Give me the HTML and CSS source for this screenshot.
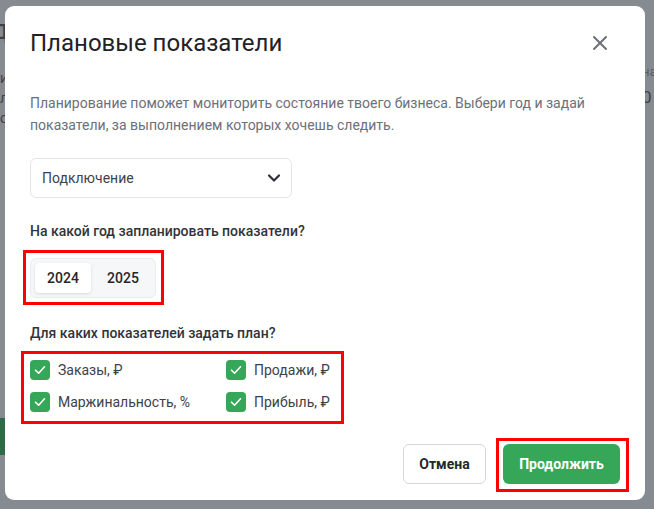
FILE: index.html
```html
<!DOCTYPE html>
<html lang="ru">
<head>
    <meta charset="UTF-8">
    <meta name="viewport" content="width=device-width, initial-scale=1.0">
    <title>Плановые показатели</title>
    <link rel="stylesheet" href="styles.css">
</head>
<body>
    <!-- page under the overlay -->
    <div class="page">
        <div class="page-left">
            <p class="page-title">Д</p>
            <p>Ми</p>
            <p>Пл</p>
            <p>Ро</p>
            <div class="page-btn"></div>
        </div>
        <div class="page-right">
            <p class="small">на</p>
            <p class="big">0</p>
        </div>
    </div>

    <div class="backdrop">
        <div class="modal">
            <div class="modal-header">
                <h1>Плановые показатели</h1>
                <button class="close-btn" aria-label="Закрыть">
                    <svg width="16" height="16" viewBox="0 0 16 16">
                        <path d="M2 2L14 14M14 2L2 14" stroke="#6b7078" stroke-width="2" stroke-linecap="round"/>
                    </svg>
                </button>
            </div>

            <p class="description">Планирование поможет мониторить состояние твоего бизнеса. Выбери год и задай показатели, за выполнением которых хочешь следить.</p>

            <div class="select">
                <span>Подключение</span>
                <svg width="14" height="14" viewBox="0 0 14 14">
                    <path d="M2 4.5L7 9.5L12 4.5" fill="none" stroke="#2b2f36" stroke-width="2.2" stroke-linecap="round" stroke-linejoin="round"/>
                </svg>
            </div>

            <p class="field-label year-label">На какой год запланировать показатели?</p>

            <div class="year-toggle">
                <button class="year-btn active">2024</button>
                <button class="year-btn">2025</button>
            </div>

            <p class="field-label metrics-label">Для каких показателей задать план?</p>

            <div class="metrics">
                <label class="check"><span class="box"><svg width="14" height="14" viewBox="0 0 14 14"><path d="M2.5 7.2L5.6 10.2L11.5 3.8" fill="none" stroke="#fff" stroke-width="1.6" stroke-linecap="round" stroke-linejoin="round"/></svg></span>Заказы, ₽</label>
                <label class="check"><span class="box"><svg width="14" height="14" viewBox="0 0 14 14"><path d="M2.5 7.2L5.6 10.2L11.5 3.8" fill="none" stroke="#fff" stroke-width="1.6" stroke-linecap="round" stroke-linejoin="round"/></svg></span>Продажи, ₽</label>
                <label class="check"><span class="box"><svg width="14" height="14" viewBox="0 0 14 14"><path d="M2.5 7.2L5.6 10.2L11.5 3.8" fill="none" stroke="#fff" stroke-width="1.6" stroke-linecap="round" stroke-linejoin="round"/></svg></span>Маржинальность, %</label>
                <label class="check"><span class="box"><svg width="14" height="14" viewBox="0 0 14 14"><path d="M2.5 7.2L5.6 10.2L11.5 3.8" fill="none" stroke="#fff" stroke-width="1.6" stroke-linecap="round" stroke-linejoin="round"/></svg></span>Прибыль, ₽</label>
            </div>

            <div class="modal-footer">
                <button class="btn btn-cancel">Отмена</button>
                <button class="btn btn-primary">Продолжить</button>
            </div>
        </div>
    </div>
</body>
</html>
```

FILE: styles.css
```css
* {
    margin: 0;
    padding: 0;
    box-sizing: border-box;
}

body {
    font-family: Roboto, "Noto Sans", Arial, sans-serif;
    background-color: #868a91;
    height: 509px;
    overflow: hidden;
}

/* background page, already dimmed */
.page {
    display: flex;
    justify-content: space-between;
    height: 509px;
    color: #3e4147;
    font-size: 14px;
}

.page-left {
    width: 40px;
    margin-left: -32px;
    padding-top: 22px;
}

.page-left p {
    line-height: 20px;
    text-align: right;
}

.page-left .page-title {
    font-size: 20px;
    font-weight: 700;
    margin-bottom: 26px;
}

.page-btn {
    margin-top: 290px;
    height: 37px;
    background-color: #2d6a45;
    border-radius: 4px;
}

.page-right {
    width: 30px;
    margin-right: -18px;
    padding-top: 64px;
}

.page-right .small {
    color: #5a5e65;
    font-size: 13px;
}

.page-right .big {
    font-size: 17px;
    margin-top: 8px;
}

/* modal */
.backdrop {
    position: fixed;
    inset: 0;
    padding: 6px 9px 9px 5px;
}

.modal {
    height: 100%;
    background-color: #fff;
    border-radius: 9px;
    padding: 24px 25px 16px 25px;
    display: flex;
    flex-direction: column;
}

.modal-header {
    display: flex;
    justify-content: space-between;
    align-items: center;
    padding-right: 12px;
}

.modal-header h1 {
    font-size: 24px;
    font-weight: 400;
    line-height: 26px;
    color: #1f2226;
}

.close-btn {
    border: none;
    background: none;
    display: flex;
    cursor: pointer;
}

.description {
    margin-top: 36px;
    font-size: 14px;
    line-height: 22px;
    color: #6b7079;
    max-width: 570px;
}

.select {
    margin-top: 22px;
    width: 262px;
    height: 40px;
    border: 1px solid #e3e5e8;
    border-radius: 6px;
    padding: 0 10px 0 11px;
    display: flex;
    align-items: center;
    justify-content: space-between;
    font-size: 14px;
    color: #3d4249;
}

.field-label {
    font-size: 14px;
    font-weight: 500;
    line-height: 20px;
    color: #30343a;
}

.year-label {
    margin-top: 23px;
}

.metrics-label {
    margin-top: 25px;
}

/* red annotation frames */
.year-toggle,
.metrics,
.btn-primary {
    position: relative;
}

.year-toggle::after,
.metrics::after,
.btn-primary::after {
    content: "";
    position: absolute;
    border: 3px solid #ff0000;
    pointer-events: none;
}

.year-toggle::after {
    inset: -9px -9px -8px -8px;
}

.metrics::after {
    inset: -9px -9px -12px -9px;
}

.btn-primary::after {
    inset: -6px -9px -8px -7px;
}

.year-toggle {
    margin-top: 17px;
    width: 126px;
    height: 40px;
    display: flex;
    gap: 4px;
    padding: 4px;
    background-color: #f6f7f9;
    border: 1px solid #e8eaed;
    border-radius: 6px;
}

.year-btn {
    width: 56px;
    border: none;
    background: none;
    border-radius: 4px;
    font-family: inherit;
    font-size: 14px;
    font-weight: 500;
    color: #23272c;
}

.year-btn.active {
    background-color: #fff;
    box-shadow: 0 1px 3px rgba(0, 0, 0, 0.12);
}

.metrics {
    margin-top: 17px;
    width: 305px;
    display: grid;
    grid-template-columns: 196px 109px;
    row-gap: 12px;
}

.check {
    display: flex;
    align-items: center;
    gap: 8px;
    font-size: 14px;
    line-height: 20px;
    color: #3d4249;
    white-space: nowrap;
}

.box {
    width: 20px;
    height: 20px;
    border-radius: 4px;
    background-color: #36a758;
    display: flex;
    align-items: center;
    justify-content: center;
}

.modal-footer {
    margin-top: auto;
    display: flex;
    justify-content: flex-end;
    gap: 17px;
}

.btn {
    height: 40px;
    border-radius: 6px;
    font-family: inherit;
    font-size: 14px;
    font-weight: 700;
    cursor: pointer;
}

.btn-cancel {
    width: 83px;
    background-color: #fff;
    border: 1px solid #d4d6da;
    color: #24282d;
}

.btn-primary {
    width: 117px;
    background-color: #36a758;
    border: none;
    color: #fff;
}
```
